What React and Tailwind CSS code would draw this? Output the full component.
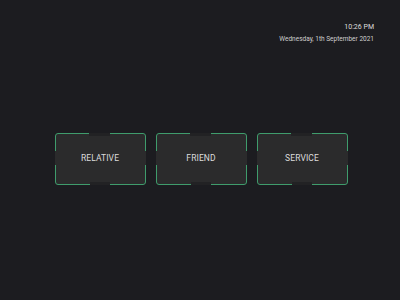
import React from 'react';

const Card = ({ label }) => {
  return (
    <div className="relative w-[91px] h-[52px] rounded-[3px] border border-[#3f9c6c] bg-[#2b2b2c] flex items-center justify-center">
      {/* gaps in the frame */}
      <div className="absolute -top-px left-[33px] w-[21px] h-[3px] bg-[#222224]"></div>
      <div className="absolute -bottom-px left-[34px] w-[20px] h-[3px] bg-[#222224]"></div>
      <div className="absolute -left-px top-[17px] w-[3px] h-[14px] bg-[#2b2b2c]"></div>
      <div className="absolute -right-px top-[17px] w-[3px] h-[14px] bg-[#2b2b2c]"></div>
      <span className="relative text-[8.5px] text-[#dcdcdc] tracking-[0.1px]">{label}</span>
    </div>
  );
};

const App = () => {
  return (
    <div
      className="w-[400px] h-[300px] bg-[#1c1c20] flex flex-col overflow-hidden"
      style={{ fontFamily: 'Roboto, "Noto Sans", sans-serif' }}
    >
      {/* Clock */}
      <div className="flex flex-col items-end pr-[26px] pt-[24px] leading-none">
        <span className="text-[7px] text-[#dedede]">10:26 PM</span>
        <span className="mt-[5px] text-[6.5px] text-[#cfcfcf]">Wednesday, 1th September 2021</span>
      </div>

      {/* Buttons */}
      <div className="flex justify-center gap-[10px] mt-[90px] pl-[2px]">
        <Card label="RELATIVE" />
        <Card label="FRIEND" />
        <Card label="SERVICE" />
      </div>
    </div>
  );
};

export default App;
